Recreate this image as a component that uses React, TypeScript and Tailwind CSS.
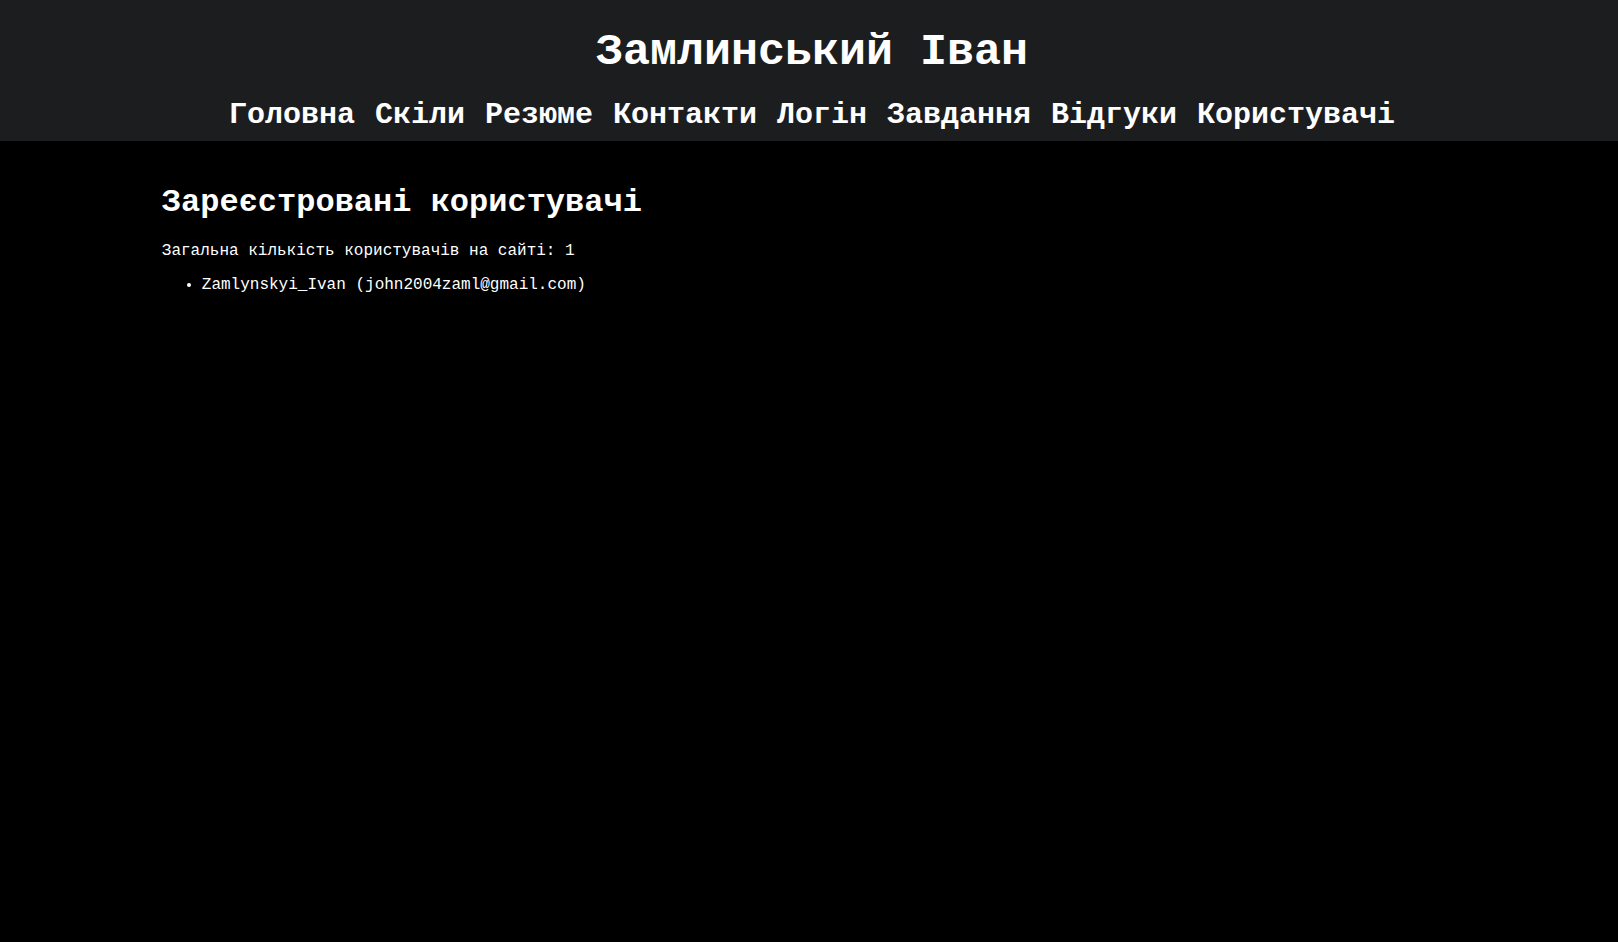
import React from 'react';

const links = ['Головна', 'Скіли', 'Резюме', 'Контакти', 'Логін', 'Завдання', 'Відгуки', 'Користувачі'];

const users = [{ name: 'Zamlynskyi_Ivan', email: 'john2004zaml@gmail.com' }];

export default function App() {
  return (
    <div className="min-h-screen bg-black text-white font-['Liberation_Mono','Courier_New',monospace]">
      <header className="bg-[#1c1d1f] pt-[27px] pb-[9px] pl-[6px] flex flex-col items-center gap-[20px]">
        <h1 className="text-[45px] leading-[51px] font-bold">Замлинський Іван</h1>
        <nav className="flex gap-[20px] text-[30px] leading-[34px] font-bold">
          {links.map((l) => (
            <a key={l} href="#" className="text-white">
              {l}
            </a>
          ))}
        </nav>
      </header>

      <main className="w-4/5 mx-auto pt-[23px]">
        <h2 className="text-[32px] leading-[36px] font-bold my-[21px]">Зареєстровані користувачі</h2>
        <p className="text-base leading-[18px] my-4">
          Загальна кількість користувачів на сайті: {users.length}
        </p>
        <ul className="list-disc pl-10 my-4 text-base leading-[18px]">
          {users.map((u) => (
            <li key={u.email}>
              {u.name} ({u.email})
            </li>
          ))}
        </ul>
      </main>
    </div>
  );
}
